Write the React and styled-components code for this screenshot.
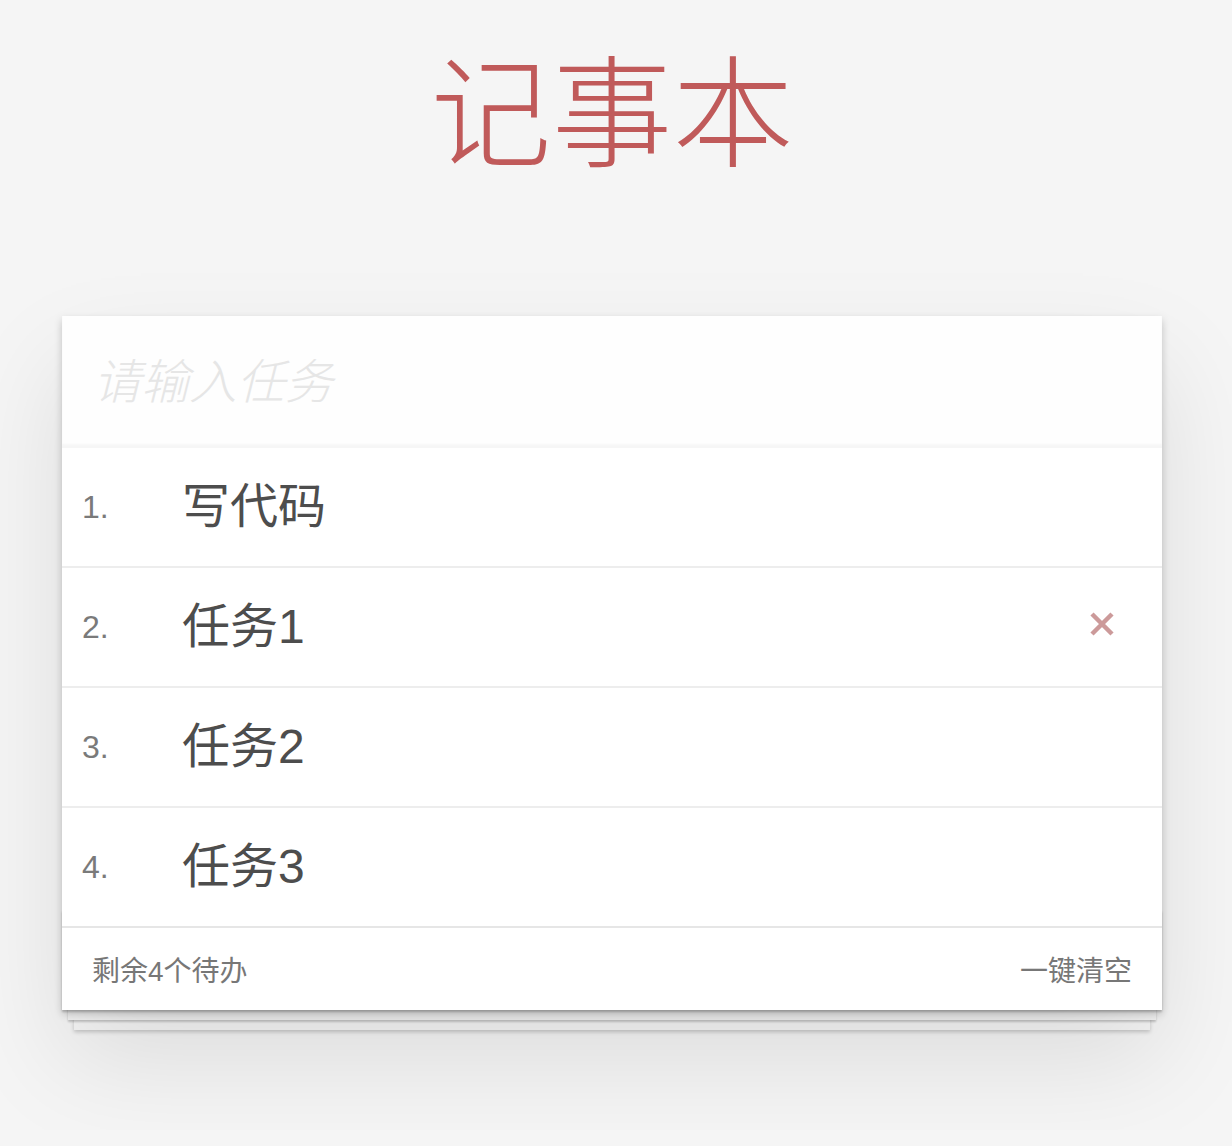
import React, { useState } from 'react';
import styled, { createGlobalStyle } from 'styled-components';

const GlobalStyle = createGlobalStyle`
  html, body {
    margin: 0;
    padding: 0;
  }
  body {
    background: #f5f5f5;
    font-family: "Liberation Sans", "Noto Sans CJK SC", sans-serif;
    color: #4d4d4d;
    -webkit-font-smoothing: antialiased;
  }
`;

const Page = styled.div`
  width: 1100px;
  margin-left: 62px;
  padding-top: 55px;
  padding-bottom: 120px;
`;

const Title = styled.h1`
  margin: 0 0 140px;
  font-size: 121px;
  line-height: 1;
  font-weight: 300;
  text-align: center;
  color: #c05a5a;
`;

const Card = styled.section`
  position: relative;
  background: #fff;
  box-shadow: 0 4px 8px 0 rgba(0, 0, 0, 0.2), 0 50px 100px 0 rgba(0, 0, 0, 0.1);
`;

const NewTodo = styled.input`
  display: block;
  box-sizing: border-box;
  width: 100%;
  margin: 0;
  padding: 33px 32px 32px 31px;
  border: none;
  outline: none;
  background: rgba(0, 0, 0, 0.003);
  box-shadow: inset 0 -4px 2px rgba(0, 0, 0, 0.03);
  font-family: inherit;
  font-size: 48px;
  line-height: 1.4;
  color: #4d4d4d;
  caret-color: #333;

  &::placeholder {
    font-style: italic;
    font-weight: 300;
    color: #e6e6e6;
  }
`;

const List = styled.ul`
  margin: 0;
  padding: 0;
  list-style: none;
`;

const Item = styled.li`
  display: flex;
  align-items: center;
  border-bottom: 2px solid #ededed;
`;

const Index = styled.span`
  width: 100px;
  padding-left: 20px;
  font-size: 32px;
  color: #7a7a7a;
`;

const Label = styled.label`
  flex: 1;
  padding: 30px 0;
  font-size: 48px;
  line-height: 58px;
  color: #4d4d4d;
`;

const Destroy = styled.button`
  width: 80px;
  height: 80px;
  margin: 0 20px 6px 0;
  padding: 0;
  border: none;
  background: none;
  display: flex;
  align-items: center;
  justify-content: center;
  color: #cc9a9a;
  cursor: pointer;
  visibility: ${(props) => (props.$show ? 'visible' : 'hidden')};
`;

const Footer = styled.footer`
  position: relative;
  display: flex;
  justify-content: space-between;
  align-items: center;
  height: 82px;
  padding: 0 30px;
  border-top: 2px solid #e6e6e6;
  margin-top: -2px;
  font-size: 28px;
  color: #777;

  &::before {
    content: '';
    position: absolute;
    left: 0;
    right: 0;
    bottom: 0;
    height: 100px;
    z-index: -1;
    box-shadow: 0 2px 2px rgba(0, 0, 0, 0.2), 0 16px 0 -6px #f6f6f6,
      0 18px 2px -6px rgba(0, 0, 0, 0.2), 0 32px 0 -12px #f6f6f6,
      0 34px 4px -12px rgba(0, 0, 0, 0.2);
  }
`;

const Count = styled.span``;

const Clear = styled.button`
  padding: 0;
  border: none;
  background: none;
  font-family: inherit;
  font-size: 28px;
  color: #777;
  cursor: pointer;
`;

const CrossIcon = () => (
  <svg width="26" height="26" viewBox="0 0 26 26">
    <path d="M3 3 L23 23 M23 3 L3 23" stroke="currentColor" strokeWidth="4.5" />
  </svg>
);

const App = () => {
  const [todos] = useState(['写代码', '任务1', '任务2', '任务3']);

  return (
    <Page>
      <GlobalStyle />
      <Title>记事本</Title>
      <Card>
        <NewTodo placeholder="请输入任务" autoFocus />
        <List>
          {todos.map((todo, i) => (
            <Item key={i}>
              <Index>{i + 1}.</Index>
              <Label>{todo}</Label>
              <Destroy $show={i === 1}>
                <CrossIcon />
              </Destroy>
            </Item>
          ))}
        </List>
        <Footer>
          <Count>剩余{todos.length}个待办</Count>
          <Clear>一键清空</Clear>
        </Footer>
      </Card>
    </Page>
  );
};

export default App;
